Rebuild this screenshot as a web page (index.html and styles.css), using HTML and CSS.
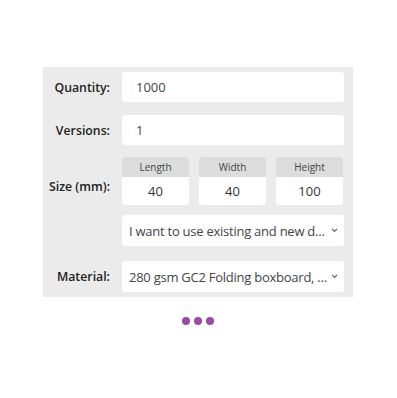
FILE: index.html
```html
<!DOCTYPE html>
<html>
<head>
<meta charset="utf-8">
<link rel="stylesheet" href="styles.css">
</head>
<body>
<div class="page">
  <div class="panel">
    <div class="row r-qty">
      <div class="label">Quantity:</div>
      <div class="field">1000</div>
    </div>
    <div class="row r-ver">
      <div class="label">Versions:</div>
      <div class="field">1</div>
    </div>
    <div class="row r-size">
      <div class="label label-size">Size (mm):</div>
      <div class="dims">
        <div class="dim"><div class="dim-h">Length</div><div class="dim-v">40</div></div>
        <div class="dim"><div class="dim-h">Width</div><div class="dim-v">40</div></div>
        <div class="dim"><div class="dim-h">Height</div><div class="dim-v">100</div></div>
      </div>
    </div>
    <div class="row r-design">
      <div class="label"></div>
      <div class="field select"><span class="sel-text">I want to use existing and new d...</span><svg class="chev" width="7" height="5" viewBox="0 0 7 5"><path d="M1 1 L3.5 3.5 L6 1" fill="none" stroke="#666" stroke-width="1.1"/></svg></div>
    </div>
    <div class="row r-mat">
      <div class="label">Material:</div>
      <div class="field select"><span class="sel-text">280 gsm GC2 Folding boxboard, ...</span><svg class="chev" width="7" height="5" viewBox="0 0 7 5"><path d="M1 1 L3.5 3.5 L6 1" fill="none" stroke="#666" stroke-width="1.1"/></svg></div>
    </div>
  </div>
  <div class="dots"><span></span><span></span><span></span></div>
</div>
</body>
</html>
```
FILE: styles.css
```css
html, body {
  margin: 0;
  padding: 0;
  background: #fff;
}
body {
  font-family: "Open Sans", "Noto Sans", sans-serif;
  color: #333;
}
.page {
  padding: 67px 0 0 43px;
}
.panel {
  width: 301px;
  background: #ebebeb;
  padding: 5px 9px 5px 0;
  box-sizing: content-box;
}
.row {
  display: flex;
  align-items: center;
}
.r-ver { margin-top: 13px; }
.r-size { margin-top: 12px; align-items: flex-start; }
.r-design { margin-top: 10px; }
.r-mat { margin-top: 15px; }
.label {
  width: 67px;
  margin-right: 12px;
  text-align: right;
  font-size: 12.3px;
  font-weight: 600;
  color: #222;
  white-space: nowrap;
  flex: none;
}
.label-size {
  margin-top: 21px;
}
.field {
  flex: 1;
  min-width: 0;
  height: 30px;
  background: #fff;
  border-radius: 3px;
  box-sizing: border-box;
  padding: 0 14px;
  font-size: 13px;
  color: #444;
  display: flex;
  align-items: center;
}
.select {
  height: 31px;
  padding: 0 6px 0 7px;
  font-size: 13px;
  letter-spacing: -0.25px;
  justify-content: space-between;
}
.sel-text {
  white-space: nowrap;
  min-width: 0;
}
.chev {
  flex: none;
  margin-left: 2px;
}
.dims {
  flex: 1;
  display: flex;
  gap: 10px;
}
.dim {
  width: 67px;
  height: 48px;
  border-radius: 3px;
  overflow: hidden;
  background: #fff;
  display: flex;
  flex-direction: column;
}
.dim-h {
  height: 20px;
  background: #dcdcdc;
  font-size: 10px;
  color: #444;
  display: flex;
  align-items: center;
  justify-content: center;
}
.dim-v {
  flex: 1;
  display: flex;
  align-items: center;
  justify-content: center;
  font-size: 13px;
  color: #333;
}
.dots {
  width: 310px;
  display: flex;
  justify-content: center;
  gap: 4px;
  margin-top: 20px;
}
.dots span {
  width: 8px;
  height: 8px;
  border-radius: 50%;
  background: #9b4aa6;
}
```
